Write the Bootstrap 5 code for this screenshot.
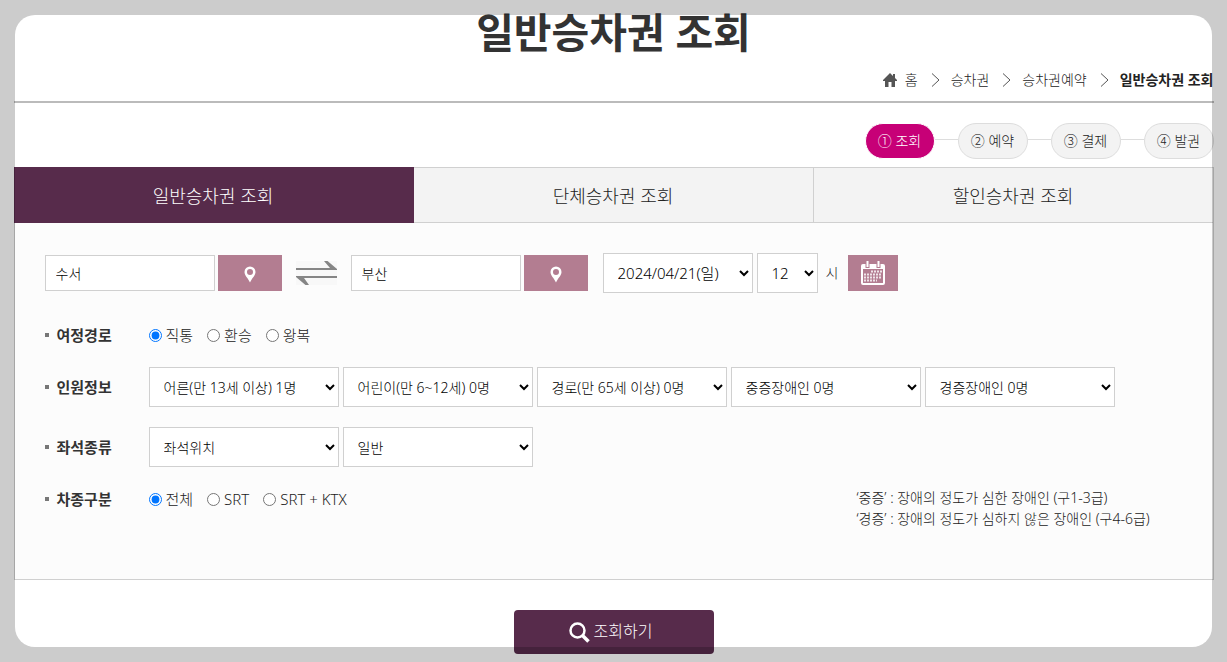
<!DOCTYPE html>
<html lang="ko">
<head>
<meta charset="utf-8">
<meta name="viewport" content="width=device-width, initial-scale=1">
<title>일반승차권 조회</title>
<link href="https://cdn.jsdelivr.net/npm/bootstrap@5.3.0/dist/css/bootstrap.min.css" rel="stylesheet">
<style>
  body { font-family: "Noto Sans", "Noto Sans CJK KR", sans-serif; font-size: 14px; line-height: 20px; font-weight: 300; color: #222; background: #fff; }
  a { color: inherit; text-decoration: none; }
  input, select, button { font-weight: 300; }
  .page-wrap { max-width: 1200px; }
  .page-title { font-size: 41px; line-height: 64px; font-weight: 700; color: #333; }
  .page-head { border-bottom: 2px solid #bbb; padding-bottom: 5px; }
  .crumbs { height: 32px; }
  .steps { padding: 20px 0 8px; }
  .step { width: 70px; height: 36px; border: 1px solid #ddd; border-radius: 18px; background: #f3f3f3; }
  .step.current { background: #c70077; border-color: #fff; color: #fff; }
  .step-line { width: 23px; height: 1px; background: #ddd; margin-bottom: 3px; }
  .tab-link { height: 56px; padding-top: 2px; font-size: 18px; background: #f3f3f3; border: 1px solid #d0d0d0; border-left: 0; }
  .tab-link.active { background: #572b4b; border-color: #572b4b; color: #fff; }
  .search-panel { background: #fcfcfc; border: 1px solid #d0d0d0; border-top: 0; padding: 30px 30px 50px; }
  .station { width: 170px; height: 36px; border: 1px solid #d0d0d0; border-radius: 0; padding: 0 10px; font-size: 14px; color: #000; }
  .pick { width: 64px; height: 36px; border: 0; background: #b37d91; margin-left: 3px; padding: 0; }
  .pick-date { width: 50px; margin-left: 10px; }
  .swap { margin: 0 14px; padding: 0; border: 0; background: #f8f8f8; line-height: 0; }
  .pick-list { height: 40px; border: 1px solid #d0d0d0; background: #fff; color: #000; padding: 0 0 0 10px; font-size: 14px; }
  .w-date { width: 150px; margin-left: 15px; font-size: 15px; }
  .w-hour { width: 61px; font-size: 15px; }
  .w-opt { width: 190px; }
  .form-rows { display: grid; gap: 20px; margin-top: 30px; }
  .row-label { width: 104px; font-size: 15px; font-weight: 700; color: #333; }
  .row-label::before { content: ""; display: inline-block; width: 4px; height: 4px; background: #777; margin-right: 8px; vertical-align: 4px; }
  .choice-row { height: 24px; font-size: 15px; }
  .choice-set { gap: 14px; }
  .choice { gap: 4px; }
  .choice input { width: 13px; height: 13px; margin: 0; }
  .note { line-height: 21px; width: 326px; }
  .search-btn { width: 200px; height: 44px; border: 0; border-radius: 4px; background: #572b4b; color: #fff; font-size: 16px; margin: 30px 0 8px; padding: 0 6px 0 0; }
  .spotlight { position: fixed; inset: 15px; border-radius: 20px; box-shadow: 0 0 0 40px rgba(0,0,0,.2); pointer-events: none; }
</style>
</head>
<body>
<div class="page-wrap mx-auto">
  <header class="page-head">
    <h1 class="page-title text-center m-0">일반승차권 조회</h1>
    <nav class="crumbs d-flex align-items-center justify-content-end" aria-label="현재 위치">
      <a href="#" class="d-flex align-items-center gap-2"><svg width="14" height="14" viewBox="0 0 14 14" fill="#555"><path d="M7 0L0 7v1h2v6h3.500V9h3v5H12V8h2V7l-2-2V1h-2v2z"/></svg>홈</a>
      <svg class="mx-2" width="17" height="16" viewBox="0 0 17 16" fill="none" stroke="#555"><path d="M6 1.500l7 6.500-7 6.500"/></svg>
      <a href="#">승차권</a>
      <svg class="mx-2" width="17" height="16" viewBox="0 0 17 16" fill="none" stroke="#555"><path d="M6 1.500l7 6.500-7 6.500"/></svg>
      <a href="#">승차권예약</a>
      <svg class="mx-2" width="17" height="16" viewBox="0 0 17 16" fill="none" stroke="#555"><path d="M6 1.500l7 6.500-7 6.500"/></svg>
      <strong class="fw-bold">일반승차권 조회</strong>
    </nav>
  </header>

  <div class="steps d-flex align-items-center justify-content-end">
    <span class="step current d-flex align-items-center justify-content-center">① 조회</span><span class="step-line"></span>
    <span class="step d-flex align-items-center justify-content-center">② 예약</span><span class="step-line"></span>
    <span class="step d-flex align-items-center justify-content-center">③ 결제</span><span class="step-line"></span>
    <span class="step d-flex align-items-center justify-content-center">④ 발권</span>
  </div>

  <nav class="row g-0">
    <div class="col"><a href="#" class="tab-link active d-flex align-items-center justify-content-center">일반승차권 조회</a></div>
    <div class="col"><a href="#" class="tab-link d-flex align-items-center justify-content-center">단체승차권 조회</a></div>
    <div class="col"><a href="#" class="tab-link d-flex align-items-center justify-content-center">할인승차권 조회</a></div>
  </nav>

  <form>
    <div class="search-panel">
      <div class="d-flex flex-wrap align-items-center">
        <input class="station" type="text" value="수서" aria-label="출발역">
        <button class="pick" type="button" aria-label="출발역 선택"><svg width="12" height="17" viewBox="0 0 12 17" fill="#fff" fill-rule="evenodd"><path d="M6 .500a5.500 5.500 0 0 1 5.500 5.500C11.500 9.500 8 12 6 16.500 4 12 .500 9.500.500 6A5.500 5.500 0 0 1 6 .500zM6 3a3 3 0 1 0 0 6 3 3 0 0 0 0-6z"/></svg></button>
        <button class="swap" type="button" aria-label="출발역 도착역 바꾸기"><svg width="41" height="24" viewBox="0 0 41 24" fill="#858585"><path d="M0 7h34L28 0h3.500L41 8v1H0zM41 15v2H8l5 7H9.500L0 16v-1z"/></svg></button>
        <input class="station" type="text" value="부산" aria-label="도착역">
        <button class="pick" type="button" aria-label="도착역 선택"><svg width="12" height="17" viewBox="0 0 12 17" fill="#fff" fill-rule="evenodd"><path d="M6 .500a5.500 5.500 0 0 1 5.500 5.500C11.500 9.500 8 12 6 16.500 4 12 .500 9.500.500 6A5.500 5.500 0 0 1 6 .500zM6 3a3 3 0 1 0 0 6 3 3 0 0 0 0-6z"/></svg></button>
        <select class="pick-list w-date me-1" aria-label="출발일"><option>2024/04/21(일)</option></select>
        <select class="pick-list w-hour me-2" id="hour"><option>12</option></select>
        <label for="hour">시</label>
        <button class="pick pick-date" type="button" aria-label="달력"><svg width="24" height="24" viewBox="0 0 24 24"><rect x="1" y="4" width="22" height="19" rx="1" fill="none" stroke="#fff" stroke-width="2"/><path d="M1 4h22v4H1z" fill="#fff"/><path d="M6.500 1v6M17.500 1v6" stroke="#b37d91" stroke-width="4"/><path d="M6.500 0v6M17.500 0v6" stroke="#fff" stroke-width="2"/><path d="M10 10.500h11M3 13.500h18M3 16.500h18M3 19.500h13" stroke="#fff" stroke-width="2" stroke-dasharray="2 1" opacity=".8"/></svg></button>
      </div>

      <div class="form-rows">
        <div class="choice-row d-flex align-items-center">
          <span class="row-label">여정경로</span>
          <div class="choice-set d-flex">
            <label class="choice d-flex align-items-center"><input type="radio" name="route" checked>직통</label>
            <label class="choice d-flex align-items-center"><input type="radio" name="route">환승</label>
            <label class="choice d-flex align-items-center"><input type="radio" name="route">왕복</label>
          </div>
        </div>

        <div class="d-flex align-items-center">
          <span class="row-label flex-shrink-0">인원정보</span>
          <div class="d-flex flex-wrap gap-1">
            <select class="pick-list w-opt" aria-label="어른"><option>어른(만 13세 이상) 1명</option></select>
            <select class="pick-list w-opt" aria-label="어린이"><option>어린이(만 6~12세) 0명</option></select>
            <select class="pick-list w-opt" aria-label="경로"><option>경로(만 65세 이상) 0명</option></select>
            <select class="pick-list w-opt" aria-label="중증장애인"><option>중증장애인 0명</option></select>
            <select class="pick-list w-opt" aria-label="경증장애인"><option>경증장애인 0명</option></select>
          </div>
        </div>

        <div class="d-flex align-items-center">
          <span class="row-label flex-shrink-0">좌석종류</span>
          <div class="d-flex flex-wrap gap-1">
            <select class="pick-list w-opt" aria-label="좌석위치"><option>좌석위치</option></select>
            <select class="pick-list w-opt" aria-label="좌석유형"><option>일반</option></select>
          </div>
        </div>

        <div class="d-flex justify-content-between">
          <div class="choice-row d-flex align-items-center">
            <span class="row-label">차종구분</span>
            <div class="choice-set d-flex">
              <label class="choice d-flex align-items-center"><input type="radio" name="train" checked>전체</label>
              <label class="choice d-flex align-items-center"><input type="radio" name="train">SRT</label>
              <label class="choice d-flex align-items-center"><input type="radio" name="train">SRT + KTX</label>
            </div>
          </div>
          <p class="note m-0">‘중증’ : 장애의 정도가 심한 장애인 (구1-3급)<br>‘경증’ : 장애의 정도가 심하지 않은 장애인 (구4-6급)</p>
        </div>
      </div>
    </div>

    <div class="text-center">
      <button class="search-btn" type="submit"><svg class="me-1" width="21" height="21" viewBox="0 0 21 21" fill="none" stroke="#fff"><circle cx="8.500" cy="8.500" r="7" stroke-width="2.500"/><path d="M13.500 13.500l6 6" stroke-width="3.500"/></svg>조회하기</button>
    </div>
  </form>
</div>
<div class="spotlight"></div>
<script src="https://cdn.jsdelivr.net/npm/bootstrap@5.3.0/dist/js/bootstrap.bundle.min.js"></script>
</body>
</html>
